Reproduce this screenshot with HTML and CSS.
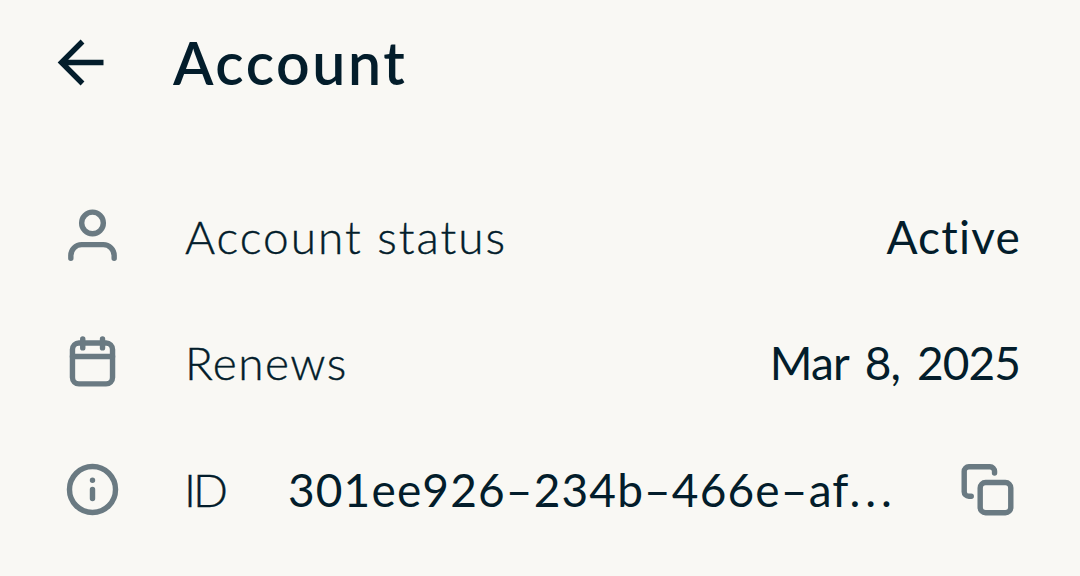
FILE: index.html
```
<!DOCTYPE html>
<html lang="en">
<head>
    <meta charset="UTF-8">
    <meta name="viewport" content="width=device-width, initial-scale=1.0">
    <title>Account</title>
    <link rel="stylesheet" href="styles.css">
</head>
<body>
    <!-- Header -->
    <header class="header">
        <svg class="back-icon" viewBox="0 0 64 64" aria-label="Back">
            <path d="M54.5 32.5H13M33.5 11.5L12.5 32.5L33.5 53.5"/>
        </svg>
        <h1 class="title">Account</h1>
    </header>

    <!-- Account details -->
    <main class="details">
        <div class="row">
            <svg class="icon" viewBox="0 0 24 24">
                <circle cx="12" cy="7" r="4"/>
                <path d="M4 20v-1a4 4 0 0 1 4-4h8a4 4 0 0 1 4 4v1"/>
            </svg>
            <span class="label label-status">Account status</span>
            <span class="value">Active</span>
        </div>
        <div class="row">
            <svg class="icon" viewBox="0 0 24 24">
                <rect x="4.6" y="4.8" width="14.8" height="15.1" rx="2.4"/>
                <path d="M4.6 9.8h14.8M8.4 3.3v3.3M15.7 3.3v3.3"/>
            </svg>
            <span class="label">Renews</span>
            <span class="value value-date">Mar 8, 2025</span>
        </div>
        <div class="row">
            <svg class="icon" viewBox="0 0 24 24">
                <circle cx="12" cy="12" r="8.5"/>
                <path d="M12 8.6v.01M12 12v3.3"/>
            </svg>
            <span class="label label-id">ID</span>
            <span class="account-id">301ee926–234b–466e–af<span class="dots">...</span></span>
            <svg class="icon copy-icon" viewBox="0 0 24 24" aria-label="Copy">
                <path d="M14.6 5.9V5.3a1.7 1.7 0 0 0-1.7-1.7H5.1a1.7 1.7 0 0 0-1.7 1.7v7.5a1.7 1.7 0 0 0 1.7 1.7H6"/>
                <rect x="9.3" y="9.4" width="11.3" height="11.2" rx="2"/>
            </svg>
        </div>
    </main>
</body>
</html>
```
FILE: styles.css
```
* {
    box-sizing: border-box;
}

body {
    margin: 0;
    height: 576px;
    overflow: hidden;
    font-family: Lato, "Open Sans", sans-serif;
    color: #031d2b;
    background: #f9f8f4;
}

/* Header */
.header {
    display: flex;
    align-items: center;
    height: 128px;
    padding-left: 49px;
}

.back-icon {
    width: 64px;
    height: 64px;
    margin-top: -4px;
    fill: none;
    stroke: #031d2b;
    stroke-width: 5.4;
}

.title {
    margin: -2px 0 0 60px;
    font-size: 59px;
    font-weight: 600;
    line-height: 70px;
    letter-spacing: 2.6px;
}

/* Rows */
.details {
    padding: 45px 59px 0 60px;
}

.row {
    display: flex;
    align-items: center;
    height: 126.6px;
    font-size: 46px;
    line-height: 60px;
    white-space: nowrap;
}

.icon {
    flex: none;
    width: 65px;
    height: 65px;
    fill: none;
    stroke: #6a7a82;
    stroke-width: 2;
    stroke-linecap: round;
    stroke-linejoin: round;
}

.label,
.value,
.account-id {
    padding-top: 1px;
}

.label {
    margin-left: 60px;
    font-weight: 300;
    letter-spacing: 1.4px;
    -webkit-text-stroke: 0.4px #031d2b;
}

.label-status {
    letter-spacing: 2px;
}

.label-id {
    margin-left: 59px;
    letter-spacing: -3px;
}

.value {
    margin-left: auto;
    letter-spacing: 1.2px;
}

.value-date {
    margin-right: 1px;
    letter-spacing: -0.9px;
    word-spacing: 6px;
}

.account-id {
    margin-left: 63px;
    letter-spacing: 1.15px;
}

.dots {
    letter-spacing: 4.8px;
}

.copy-icon {
    margin-left: auto;
    margin-right: 1px;
}
```
